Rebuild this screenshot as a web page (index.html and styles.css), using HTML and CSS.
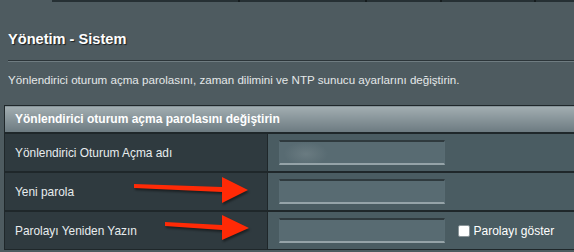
FILE: index.html
```html
<!DOCTYPE html>
<html>
<head>
    <title>Yönetim - Sistem</title>
    <link rel="stylesheet" href="styles.css">
</head>
<body>
    <div class="page">
        <div class="topbar">
            <span></span><span></span><span></span><span></span>
        </div>

        <div class="title">Yönetim - Sistem</div>
        <div class="divider"></div>
        <div class="desc">Yönlendirici oturum açma parolasını, zaman dilimini ve NTP sunucu ayarlarını değiştirin.</div>

        <table class="form">
            <tr>
                <th colspan="2">Yönlendirici oturum açma parolasını değiştirin</th>
            </tr>
            <tr>
                <td class="lbl">Yönlendirici Oturum Açma adı</td>
                <td class="val"><input type="text" class="blurred"></td>
            </tr>
            <tr>
                <td class="lbl">Yeni parola</td>
                <td class="val"><input type="password"></td>
            </tr>
            <tr>
                <td class="lbl">Parolayı Yeniden Yazın</td>
                <td class="val">
                    <input type="password">
                    <label class="show"><span class="box"></span>Parolayı göster</label>
                </td>
            </tr>
        </table>

        <!-- kirmizi oklar -->
        <svg class="arrow arrow1" width="120" height="30" viewBox="0 0 120 30">
            <polygon points="0,7 88,10 88,0 114,13 88,26 88,15 0,11" />
        </svg>
        <svg class="arrow arrow2" width="90" height="30" viewBox="0 0 90 30">
            <polygon points="0,7 57,10 57,0 84,13 57,25 57,15 0,11" />
        </svg>
    </div>
</body>
</html>
```
FILE: styles.css
```css
body{
    margin: 0;
    background-color: #4e5b60;
    font-family: "Liberation Sans", Arial, sans-serif;
    overflow: hidden;
}

.page{
    position: relative;
    width: 574px;
    height: 252px;
    overflow: hidden;
}

.topbar{
    margin-left: 52px;
    height: 2px;
    background-color: #263034;
    display: flex;
    align-items: flex-start;
}

.topbar span{
    height: 2px;
    width: 2px;
    background-color: #161c1e;
    margin-left: 186px;
}
.topbar span:nth-child(2){ margin-left: 125px; }
.topbar span:nth-child(3){ margin-left: 73px; }
.topbar span:nth-child(4){ margin-left: 92px; }

.title{
    margin: 29px 0 0 8px;
    font-size: 14.6px;
    font-weight: bold;
    color: #ffffff;
    text-shadow: 1px 1px 1px #1a1f22;
    height: 19px;
}

.divider{
    margin: 10px 0 0 8px;
    height: 1px;
    background-color: #2c3539;
    border-bottom: 1px solid #6f7c81;
}

.desc{
    margin: 11px 0 0 8px;
    font-size: 11.6px;
    color: #e4e8e9;
    height: 15px;
}

table.form{
    margin: 17px 0 0 4px;
    width: 620px;
    border-collapse: collapse;
    border: 1px solid #1f272a;
}

.form th{
    height: 26px;
    padding: 0 0 0 10px;
    text-align: left;
    font-size: 12px;
    font-weight: bold;
    color: #ffffff;
    background: linear-gradient(#a2aeb2, #6c7a80);
    border-bottom: 2px solid #1f272a;
}

.form td{
    height: 37px;
    border-top: 2px solid #1f272a;
    padding: 0;
}

.lbl{
    width: 252px;
    padding-left: 10px !important;
    background-color: #2f3a3f;
    color: #e8ecee;
    font-size: 11.9px;
    border-right: 1px solid #1f272a;
}

.val{
    background-color: #4a5c62;
    padding-left: 11px !important;
}

.val input{
    width: 164px;
    height: 21px;
    padding: 0;
    margin: 0;
    vertical-align: middle;
    background-color: #586b72;
    border: 1px solid #596c73;
    border-top: 2px solid #2f3a3e;
    border-bottom: 2px solid #95a3a8;
    outline: none;
}

.val input.blurred{
    background: radial-gradient(ellipse 22px 12px at 26px 12px, #6a7b81, #586b72);
}

.show{
    display: inline-flex;
    align-items: center;
    margin-left: 9px;
    vertical-align: middle;
    font-size: 12px;
    color: #ffffff;
}

.box{
    width: 10px;
    height: 10px;
    margin-right: 3px;
    background-color: #ffffff;
    border: 1px solid #8a9599;
    border-radius: 2px;
}

.arrow{
    position: absolute;
    filter: drop-shadow(1px 2px 1px rgba(0, 0, 0, 0.45));
}

.arrow polygon{
    fill: #ff2a06;
}

.arrow1{
    left: 134px;
    top: 177px;
}

.arrow2{
    left: 165px;
    top: 215px;
}
```
